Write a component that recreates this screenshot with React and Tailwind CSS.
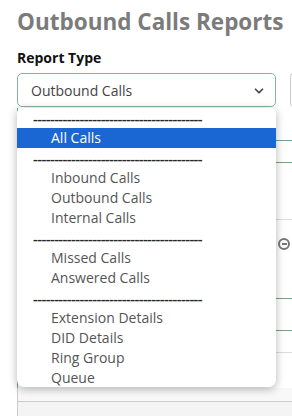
import { ChevronDown } from 'lucide-react';

const options = [
  { type: 'sep' },
  { label: 'All Calls', active: true },
  { type: 'sep' },
  { label: 'Inbound Calls' },
  { label: 'Outbound Calls' },
  { label: 'Internal Calls' },
  { type: 'sep' },
  { label: 'Missed Calls' },
  { label: 'Answered Calls' },
  { type: 'sep' },
  { label: 'Extension Details' },
  { label: 'DID Details' },
  { label: 'Ring Group' },
  { label: 'Queue' },
];

const DASHES = '----------------------------------------';

function Option({ item }) {
  if (item.type === 'sep') {
    return (
      <div className="h-5 pl-4 flex items-center text-[#2a2a2a] text-[15px] font-semibold leading-5 whitespace-nowrap tracking-[-0.6px]">
        {DASHES}
      </div>
    );
  }
  return (
    <div
      className={
        item.active
          ? 'h-5 pl-[34px] text-[14px] leading-5 bg-[#1a66d2] text-white'
          : 'h-5 pl-[34px] text-[14px] leading-5 text-[#555]'
      }
    >
      {item.label}
    </div>
  );
}

export default function App() {
  return (
    <div className="w-[292px] h-[416px] bg-white overflow-hidden font-['Open_Sans',sans-serif]">
      <div className="pl-[17px] pt-[6px]">
        <h1 className="text-[22.5px] font-bold text-[#7b7b7b] leading-8 whitespace-nowrap">
          Outbound Calls Reports
        </h1>
        <div className="mt-[10px] text-[14px] font-bold text-[#111] leading-5">Report Type</div>
        <div className="mt-[5px] flex items-start gap-[14px]">
          <div className="w-[259px] h-[34px] border border-[#86b59a] rounded-[5px] flex items-center justify-between pl-[13px] pr-[9px] text-[14px] text-[#444] shrink-0">
            <span>Outbound Calls</span>
            <ChevronDown size={14} strokeWidth={3} className="text-[#444] mt-[2px]" />
          </div>
          <div className="w-[4px] h-[34px] border-l border-y border-[#ccc] rounded-l-[4px] shrink-0" />
        </div>

        <div className="relative mt-[1px]">
          {/* page content behind the open menu */}
          <div className="border-l border-[#7aa38a] h-[280px] flex flex-col">
            <div className="h-[32px]" />
            <div className="h-[23px] border-y border-[#7aa38a]" />
            <div className="h-[57px] border-b border-[#ddd]" />
            <div className="h-[14px]" />
            <div className="h-[20px] flex justify-end pr-[2px] items-center">
              <div className="w-[12px] h-[12px] rounded-full border-2 border-[#777] flex items-center justify-center">
                <div className="w-[5px] h-[2px] bg-[#777]" />
              </div>
            </div>
            <div className="h-[45px] border-b border-[#7aa38a]" />
            <div className="h-[32px] border-b border-[#7aa38a]" />
            <div className="h-[22px] border-b border-[#ddd]" />
          </div>
          <div className="border-l border-[#ccc] h-[13px] bg-[#f8f8f8]" />
          <div className="border-l border-t border-[#ccc] h-[20px] bg-[#f4f4f4]" />

          <div className="absolute left-0 top-0 w-[259px] h-[279px] bg-white rounded-b-[7px] rounded-t-[5px] shadow-[0_2px_8px_rgba(0,0,0,0.3)] overflow-hidden">
            {options.map((item, i) => (
              <Option key={i} item={item} />
            ))}
          </div>
        </div>
      </div>
    </div>
  );
}
